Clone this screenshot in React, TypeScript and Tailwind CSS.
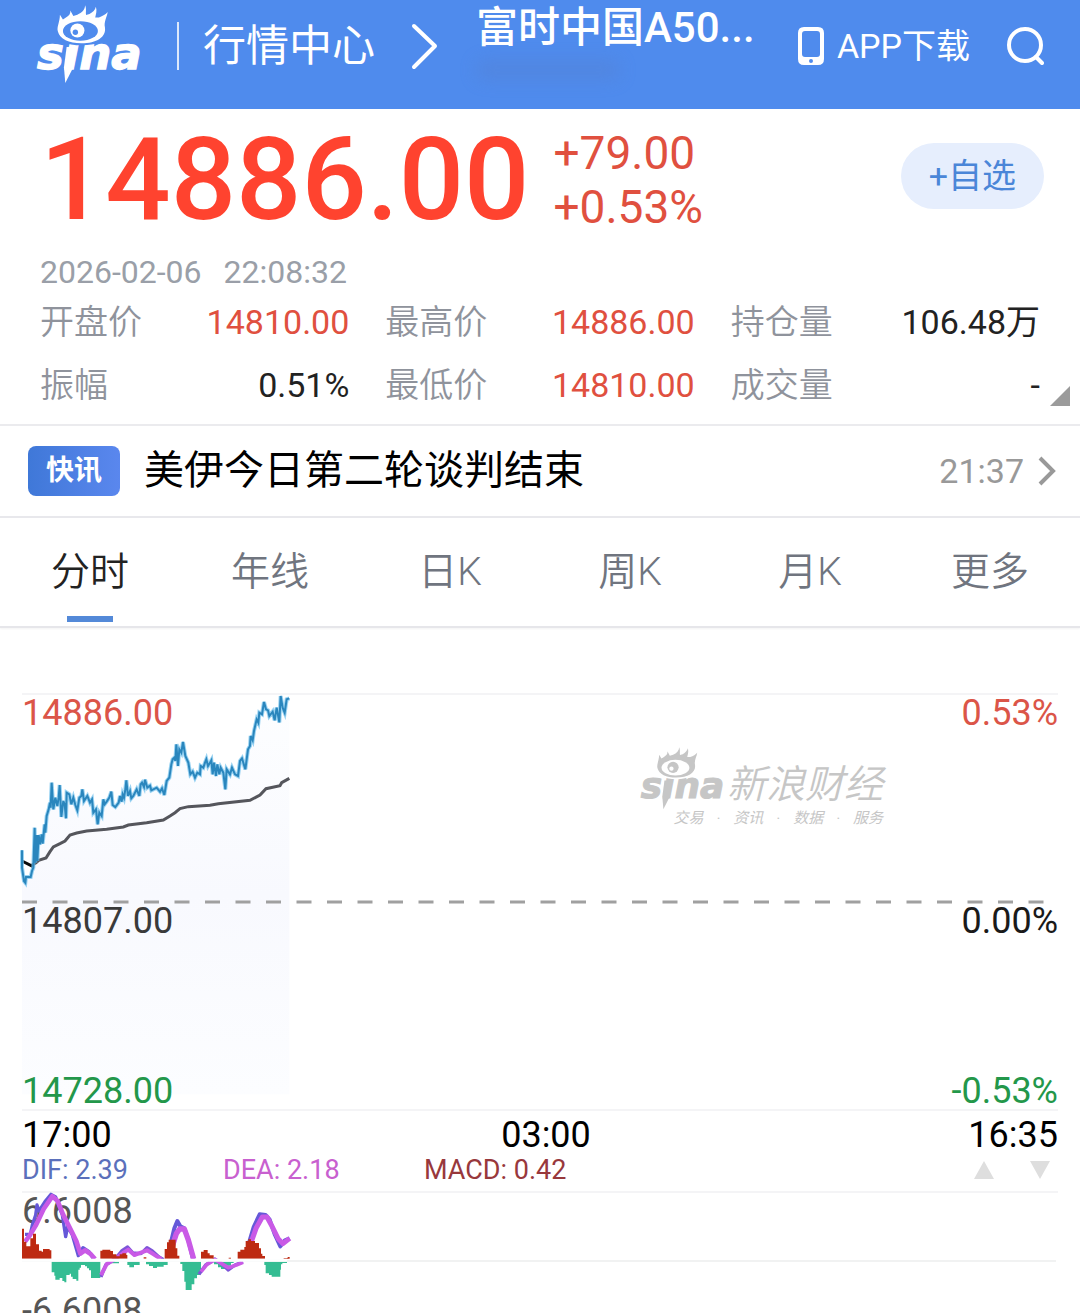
import React, { useState } from 'react';

const stats = [
  { label: '开盘价', value: '14810.00', color: 'text-[#e0503f]' },
  { label: '最高价', value: '14886.00', color: 'text-[#e0503f]' },
  { label: '持仓量', value: '106.48万', color: 'text-[#222222]' },
  { label: '振幅', value: '0.51%', color: 'text-[#222222]' },
  { label: '最低价', value: '14810.00', color: 'text-[#e0503f]' },
  { label: '成交量', value: '-', color: 'text-[#222222]' },
];

const tabs = ['分时', '年线', '日K', '周K', '月K', '更多'];

const pricePoints =
  '36,508 36,560 42,600 46,605 48,588 62,588 66,570 70,560 74,440 76,545 80,462 82,540 86,462 90,490 95,460 98,488 104,430 106,455 110,405 116,385 120,365 122,380 125,305 130,385 136,350 142,375 146,350 149,312 154,408 160,360 164,370 168,412 170,335 178,340 184,370 190,350 196,372 202,388 208,350 214,345 217,325 222,360 232,345 240,365 246,355 250,395 258,385 263,430 268,395 275,405 280,355 284,370 290,362 298,350 304,332 308,372 316,378 326,365 330,345 335,362 338,340 342,350 346,325 349,298 354,345 360,330 364,352 370,345 380,325 388,345 392,310 396,305 402,318 405,296 412,320 420,314 424,328 440,320 450,332 456,322 463,342 470,300 478,290 484,250 488,235 493,230 496,240 499,190 504,255 508,205 514,215 519,183 526,225 535,245 541,280 548,272 555,290 562,275 570,280 572,255 580,260 585,245 589,235 594,255 600,245 604,238 608,280 612,245 618,285 622,250 628,280 632,260 640,275 646,325 650,265 660,280 666,260 675,280 684,285 690,240 696,232 706,265 714,205 720,195 722,165 728,178 732,150 740,115 745,125 748,95 756,100 762,63 768,85 774,88 778,105 788,92 794,118 800,80 808,124 812,45 818,80 824,95 830,55 838,52';

const averagePoints =
  '66,552 78,545 86,538 108,531 120,512 130,498 150,488 165,480 180,462 200,456 230,450 290,445 340,438 355,432 410,425 460,417 480,405 495,395 510,383 535,377 600,373 625,368 720,358 750,342 768,323 810,314 815,305 838,292';

// 带火焰睫毛的眼睛 + 字标
function SinaLogo({ className, hole }: { className: string; hole: string }) {
  return (
    <svg viewBox="15 15 324 235" className={className} fill="currentColor" role="img" aria-label="sina">
      <text x="18" y="206" fontSize="134" fontWeight="700" fontStyle="italic" fontFamily="DejaVu Sans" stroke="currentColor" strokeWidth="4">
        sina
      </text>
      <path d="M106 140 L98 200 L102 247 L126 200 L136 140 Z" />
      <path d="M80 94 C88 120 112 128 150 128 C196 128 222 112 220 84" fill={hole} stroke={hole} strokeWidth="14" />
      <path d="M80 94 C76 80 86 66 86 44 L95 58 L104 52 C114 46 118 40 117 31 L126 48 L138 44 C152 38 160 30 161 16 C166 28 162 36 164 45 L174 42 C184 36 191 30 193 20 C197 32 193 42 191 52 L202 52 C214 48 222 43 228 36 C227 50 216 64 220 82 C224 110 196 129 150 129 C112 129 86 116 80 94 Z" />
      <ellipse cx="147" cy="92" rx="52" ry="29" fill={hole} />
      <circle cx="138" cy="91" r="21" />
      <circle cx="132" cy="96" r="8" fill={hole} />
    </svg>
  );
}

function Header() {
  return (
    <header className="flex h-[109px] items-center bg-[#4f8bed] pr-9 pb-4 pl-9 text-white">
      <a href="#home" aria-label="sina" className="mb-1">
        <SinaLogo className="h-[79px] w-[109px]" hole="#4f8bed" />
      </a>
      <span className="ml-8 h-12 w-[2px] bg-white/80" />
      <a href="#market" className="ml-6 text-[43px] leading-[48px] whitespace-nowrap">
        行情中心
      </a>
      <svg viewBox="0 0 27 47" className="ml-9 h-[47px] w-[27px]" fill="none" stroke="currentColor" strokeWidth="4" strokeLinecap="round" strokeLinejoin="round">
        <path d="M3 3 L24 23 L3 44" />
      </svg>
      <div className="ml-[38px] self-start pt-1">
        <h1 className="text-[42px] leading-[48px] font-medium whitespace-nowrap">富时中国A50...</h1>
        <div className="mt-2 h-5 w-36 rounded-full bg-[#5580cf]/40 blur-sm" />
      </div>
      <a href="#app" className="ml-auto flex items-center gap-3 text-[34px] leading-[48px] whitespace-nowrap">
        <svg viewBox="0 0 28 40" className="h-10 w-7">
          <path fillRule="evenodd" fill="currentColor" d="M7 1 H21 Q27 1 27 7 V33 Q27 39 21 39 H7 Q1 39 1 33 V7 Q1 1 7 1 Z M8 5 Q5 5 5 8 V28 Q5 31 8 31 H20 Q23 31 23 28 V8 Q23 5 20 5 Z M14 33 A2 2 0 1 0 14 37 A2 2 0 1 0 14 33 Z" />
        </svg>
        APP下载
      </a>
      <button type="button" aria-label="搜索" className="ml-9">
        <svg viewBox="0 0 38 40" className="h-10 w-[38px]" fill="none" stroke="currentColor" strokeWidth="4" strokeLinecap="round">
          <circle cx="19" cy="19" r="16" />
          <path d="M30 31 L36 37" />
        </svg>
      </button>
    </header>
  );
}

function Quote() {
  return (
    <section className="relative border-b-2 border-[#ebebee] px-10 pt-3 pb-[21px]">
      <div className="flex items-center">
        <div className="text-[115px] leading-[118px] font-medium text-[#ff432f]">14886.00</div>
        <div className="ml-6 text-[46px] leading-[54px] text-[#e0503f]">
          <div>+79.00</div>
          <div>+0.53%</div>
        </div>
        <button type="button" className="-mr-1 mb-2 ml-auto h-[66px] rounded-full bg-[#e6eefd] px-7 text-[34px] leading-[40px] text-[#4a86d8]">
          +自选
        </button>
      </div>
      <div className="mt-4 flex gap-[22px] text-[32px] leading-[34px] text-[#9a9fa8]">
        <span>2026-02-06</span>
        <span>22:08:32</span>
      </div>
      <dl className="mt-4 grid grid-cols-3 gap-x-9 gap-y-7 text-[34px] leading-[35px]">
        {stats.map((s) => (
          <div key={s.label} className="flex justify-between whitespace-nowrap">
            <dt className="font-[350] text-[#8f939c]">{s.label}</dt>
            <dd className={s.color}>{s.value}</dd>
          </div>
        ))}
      </dl>
      <svg viewBox="0 0 20 20" className="absolute right-[10px] bottom-[18px] size-5 fill-[#9b9b9b]">
        <path d="M20 0 V20 H0 Z" />
      </svg>
    </section>
  );
}

function News() {
  return (
    <a href="#news" className="flex h-[93px] items-center border-b-2 border-[#e8e8ec] px-6 pl-7 whitespace-nowrap">
      <span className="rounded-lg bg-linear-to-r from-[#3f78d8] to-[#5a87ee] px-[18px] py-[5px] text-[28px] leading-[40px] font-bold text-white">
        快讯
      </span>
      <span className="ml-6 text-[40px] leading-[48px] text-black">美伊今日第二轮谈判结束</span>
      <span className="ml-auto text-[34px] leading-[40px] text-[#999999]">21:37</span>
      <svg viewBox="0 0 18 30" className="ml-[14px] h-[30px] w-[18px]" fill="none" stroke="#999999" strokeWidth="4">
        <path d="M2 2 L15 15 L2 28" />
      </svg>
    </a>
  );
}

function Tabs() {
  const [active, setActive] = useState('分时');

  return (
    <nav className="grid grid-cols-6 border-b-2 border-[#e6e6ea] pt-[34px] shadow-xs">
      {tabs.map((tab) => (
        <button
          key={tab}
          type="button"
          onClick={() => setActive(tab)}
          className={
            active === tab
              ? 'flex flex-col items-center gap-6 pb-1 text-[39px] leading-[40px] font-[350] text-[#222222]'
              : 'flex flex-col items-center gap-6 pb-1 text-[39px] leading-[40px] font-[350] text-[#70757f]'
          }
        >
          {tab}
          <span className={active === tab ? 'h-[6px] w-[46px] bg-[#5389d8]' : 'h-[6px] w-[46px]'} />
        </button>
      ))}
    </nav>
  );
}

function Watermark() {
  return (
    <div className="absolute top-[53px] left-[618px] text-[#c6c6c6]">
      <div className="flex">
        <SinaLogo className="h-[63px] w-[87px]" hole="#ffffff" />
        <span className="mt-4 text-[39px] leading-[44px] font-[350] whitespace-nowrap italic">新浪财经</span>
      </div>
      <div className="flex justify-end gap-[13px] text-[15px] leading-[16px] whitespace-nowrap italic">
        <span>交易</span>
        <span>·</span>
        <span>资讯</span>
        <span>·</span>
        <span>数据</span>
        <span>·</span>
        <span>服务</span>
      </div>
    </div>
  );
}

function PriceChart() {
  return (
    <div className="relative mt-[66px] grid grid-rows-[208px_208px] text-[36px] leading-[38px]">
      <svg viewBox="0 0 1036 416" preserveAspectRatio="none" className="absolute inset-0 h-full w-full overflow-visible" fill="none">
        <defs>
          <linearGradient id="area" x1="0" y1="0" x2="0" y2="1">
            <stop offset="0" stopColor="#fdfeff" />
            <stop offset="0.5" stopColor="#f8f9fe" />
            <stop offset="1" stopColor="#fcfdff" />
          </linearGradient>
        </defs>
        <path d="M0 0 H1036 M0 416 H1036" stroke="#f4f4f6" strokeWidth="2" />
        <g transform="translate(-12 -13) scale(0.33333)">
          <polygon points={`36,1240 ${pricePoints} 838,1240`} fill="url(#area)" />
          <polyline points={averagePoints} stroke="#55565c" strokeWidth="9" />
          <path d="M36 540 L68 556" stroke="#0b0b0b" strokeWidth="9" />
          <polyline points={pricePoints} stroke="#6fc0ec" strokeWidth="12" strokeOpacity="0.7" />
          <polyline points={pricePoints} stroke="#2a86bd" strokeWidth="6" />
        </g>
        <path d="M0 208 H1022" stroke="#a0a0a0" strokeWidth="3" strokeDasharray="15 15.5" />
      </svg>
      <div className="relative flex items-start justify-between">
        <span className="text-[#db5548]">14886.00</span>
        <span className="text-[#db5548]">0.53%</span>
      </div>
      <div className="relative flex flex-col justify-between">
        <div className="flex justify-between">
          <span className="text-[#3a3a3a]">14807.00</span>
          <span className="text-[#1a1a1a]">0.00%</span>
        </div>
        <div className="flex justify-between text-[#23974a]">
          <span>14728.00</span>
          <span>-0.53%</span>
        </div>
      </div>
      <Watermark />
    </div>
  );
}

function MacdChart() {
  return (
    <div className="relative h-[122px] border-t-2 border-[#f4f4f6] text-[36px] leading-[36px] text-[#565656]">
      <div>6.6008</div>
      <div className="mt-16">-6.6008</div>
      <svg viewBox="0 0 1036 122" preserveAspectRatio="none" className="absolute inset-x-0 -top-[2px] h-[122px] w-full" fill="none">
        <path d="M0 70 H1034" stroke="#f1f2f2" strokeWidth="2" />
        <g transform="translate(-7 -6) scale(0.33333)">
          <path
            fill="#35bd93"
            d="M110 230 V262 H118 V272 H121 V284 H134 V279 H142 V288 H148 V292 H154 V270 H164 V266 H168 V275 H173 V282 H184 V287 H190 V254 H194 V248 H198 V240 H210 V244 H216 V250 H222 V256 H228 V279 H256 V230 Z M290 230 H312 V235 H290 Z M337 230 V240 H343 V247 H357 V240 H374 V230 Z M393 230 V238 H402 V243 H414 V249 H426 V245 H446 V240 H458 V230 Z M496 230 V237 H502 V258 H508 V290 H512 V315 H530 V298 H538 V280 H546 V270 H556 V262 H558 V230 Z M597 230 V238 H609 V247 H618 V252 H640 V242 H648 V234 H656 V230 Z M748 230 V240 H752 V265 H762 V270 H770 V275 H796 V254 H798 V238 H802 V234 H816 V230 Z"
          />
          <g strokeLinejoin="round">
            <polyline points="30,148 46,148 52,120 62,90 66,60 72,78 90,50 108,28 122,36 130,60 142,90 152,155 158,125 172,150 190,212 204,188 222,200 236,222" stroke="#6558d8" strokeWidth="10" />
            <polyline points="258,276 272,240 300,222 320,198 338,186 354,204 378,206 396,188 412,198 432,216 446,224" stroke="#7d55d8" strokeWidth="10" />
            <polyline points="466,180 478,130 487,108 496,124 508,130 520,165 534,222" stroke="#6558d8" strokeWidth="12" />
            <polyline points="552,268 572,240 600,222 622,238 640,255 660,240 684,230" stroke="#7d55d8" strokeWidth="10" />
            <polyline points="700,180 716,126 734,88 752,90 764,104 780,150 796,184 810,166 824,160" stroke="#6558d8" strokeWidth="12" />
            <polyline points="30,170 44,152 62,122 86,72 112,34 128,48 144,88 170,140 184,168 196,206 210,196 226,206 240,222" stroke="#c95ae6" strokeWidth="14" />
            <polyline points="258,270 276,236 300,222 324,204 340,194 358,210 380,202 396,196 416,208 438,222" stroke="#c95ae6" strokeWidth="12" />
            <polyline points="470,190 484,146 494,132 508,132 520,165 536,222" stroke="#c95ae6" strokeWidth="16" />
            <polyline points="558,260 576,238 600,224 640,248 664,240 684,232" stroke="#c95ae6" strokeWidth="11" />
            <polyline points="702,190 724,128 742,96 756,96 770,122 790,162 804,176 824,160" stroke="#c95ae6" strokeWidth="15" />
          </g>
          <path
            fill="#bd2a12"
            d="M18 221 V131 H27 V170 H34 V184 H46 V160 H54 V146 H63 V178 H72 V197 H80 V200 H84 V192 H104 V196 H109 V221 Z M256 221 V197 H262 V194 H286 V198 H294 V208 H304 V214 H314 V208 H322 V205 H334 V210 H337 V221 Z M449 221 V192 H456 V172 H461 V164 H482 V190 H487 V212 H493 V221 Z M558 221 V200 H566 V195 H578 V205 H584 V211 H596 V221 Z M668 221 V200 H676 V194 H688 V186 H692 V168 H700 V163 H708 V168 H720 V174 H732 V190 H738 V206 H742 V213 H750 V221 Z M386 221 V217 H394 V221 Z M641 221 V218 H648 V221 Z M806 221 V219 H818 V216 H824 V221 Z"
          />
          <path d="M18 226 H816" stroke="#fdfefe" strokeWidth="9" />
        </g>
      </svg>
    </div>
  );
}

function App() {
  return (
    <div className="flex h-screen w-full flex-col overflow-hidden bg-white font-[Roboto,'Noto_Sans_CJK_SC',sans-serif]">
      <Header />
      <Quote />
      <News />
      <Tabs />
      <main className="px-[22px]">
        <PriceChart />
        <div className="mt-[6px] flex justify-between text-[36px] leading-[38px] text-black">
          <span>17:00</span>
          <span className="pl-3">03:00</span>
          <span>16:35</span>
        </div>
        <div className="mb-[5px] flex items-center text-[27px] leading-[32px] whitespace-nowrap">
          <span className="w-[201px] text-[#5b70bb]">DIF: 2.39</span>
          <span className="w-[201px] text-[#c860cf]">DEA: 2.18</span>
          <span className="text-[#98383c]">MACD: 0.42</span>
          <div className="mr-2 ml-auto flex gap-9 text-[#dedede]">
            <button type="button" aria-label="上一个指标">
              <svg viewBox="0 0 20 18" className="h-[18px] w-5" fill="currentColor">
                <path d="M10 0 L20 18 H0 Z" />
              </svg>
            </button>
            <button type="button" aria-label="下一个指标">
              <svg viewBox="0 0 20 18" className="h-[18px] w-5" fill="currentColor">
                <path d="M0 0 H20 L10 18 Z" />
              </svg>
            </button>
          </div>
        </div>
        <MacdChart />
      </main>
    </div>
  );
}

export default App;
